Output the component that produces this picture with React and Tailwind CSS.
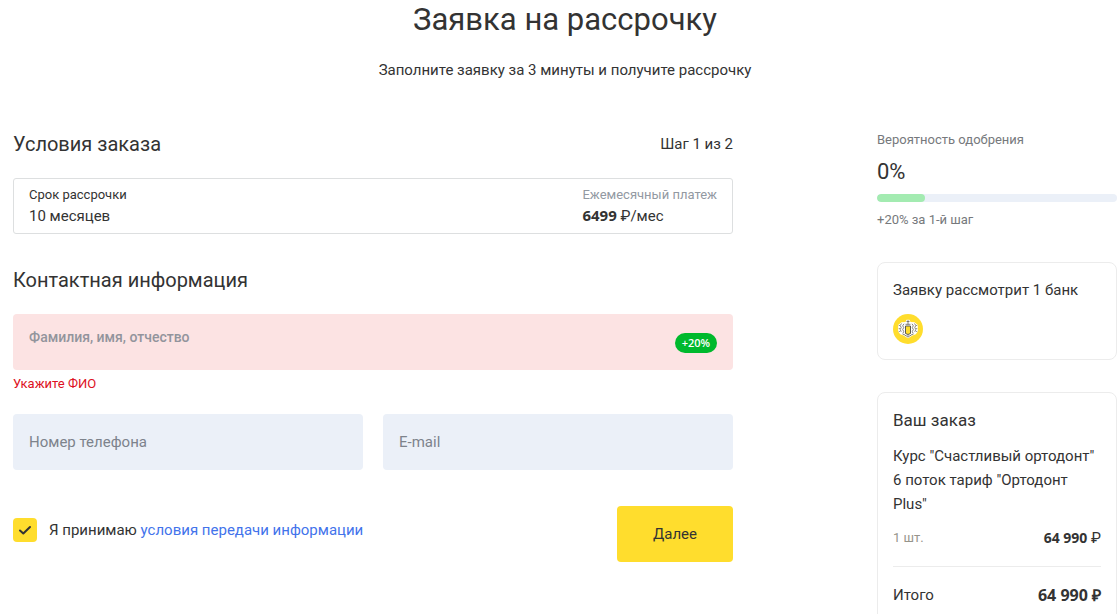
import { useState } from 'react'

const order = {
  title: 'Курс "Счастливый ортодонт" 6 поток тариф "Ортодонт Plus"',
  count: '1 шт.',
  price: '64 990',
}

function BankLogo() {
  return (
    <svg viewBox="0 0 30 30" className="block size-[30px]" role="img" aria-label="Банк">
      <circle cx="15" cy="15" r="15" fill="#ffdd2d" />
      <path
        d="M12.500 8l1-2.300h3l1 2.300 4 .2 3.300 2.800v6.500l-2 2.700-3.300 1.300L15 24.200l-4.500-2.700-3.300-1.300-2-2.700V11l3.300-2.800z"
        fill="#fff"
      />
      <g fill="none" stroke="#68655a" strokeWidth="0.8">
        <path d="M13.500 7.500h3M15 6.200v4.300M12.500 10.300h5" />
        <path d="M11 9.800l-1.300 2 1 1.700-1 2 1 2-.7 1.800M19 9.800l1.300 2-1 1.700 1 2-1 2 .7 1.800" />
        <path d="M8.500 9.500l-1.300 2 1 2-1 2 1 2.300M21.500 9.500l1.300 2-1 2 1 2-1 2.300" />
        <path d="M5.800 11.500h1M5.800 14.500h1M5.800 17.500h1M23.200 11.500h1M23.200 14.500h1M23.200 17.500h1" />
        <path d="M9.500 20l2.500 1 1 1h4l1-1 2.500-1M15 22v1.500" />
      </g>
      <path d="M12.500 12h5v7.500L15 20.500l-2.500-1z" fill="#ffdd2d" stroke="#4a4a4a" strokeWidth="0.9" />
    </svg>
  )
}

function Terms() {
  return (
    <div className="mt-5 flex justify-between rounded-[3px] border border-[#dddfe0] px-[15px] py-[6px]">
      <div>
        <p className="text-[13px] leading-5">Срок рассрочки</p>
        <p className="text-[15px] leading-[22px]">10 месяцев</p>
      </div>
      <div>
        <p className="text-[13px] leading-5 text-[#9299a2]">Ежемесячный платеж</p>
        <p className="text-[15px] leading-[22px]">
          <b className="font-['Open_Sans',sans-serif] leading-5">6499</b> ₽/мес
        </p>
      </div>
    </div>
  )
}

function Field({ id, type, label }) {
  return (
    <div className="relative min-w-0 flex-1">
      <input
        id={id}
        type={type}
        placeholder=" "
        className="peer block h-14 w-full rounded bg-[#ebf0f8] px-4 pt-4 text-[15px] outline-none"
      />
      <label
        htmlFor={id}
        className="pointer-events-none absolute top-1 left-4 text-xs leading-6 text-[#7d838c] peer-placeholder-shown:top-4 peer-placeholder-shown:text-[15px] peer-placeholder-shown:leading-6"
      >
        {label}
      </label>
    </div>
  )
}

function NameField() {
  return (
    <div className="relative mt-5">
      <input
        id="fio"
        type="text"
        aria-invalid="true"
        aria-describedby="fio-error"
        placeholder=" "
        className="peer block h-14 w-full rounded bg-[#fce3e3] pt-4 pr-20 pl-4 text-[15px] outline-none"
      />
      <label
        htmlFor="fio"
        className="pointer-events-none absolute top-1 left-4 text-xs leading-6 font-medium text-[#92949c] peer-placeholder-shown:top-[11px] peer-placeholder-shown:text-sm peer-placeholder-shown:leading-6"
      >
        Фамилия, имя, отчество
      </label>
      <span className="absolute top-[19px] right-4 rounded-full bg-[#00b92d] px-[7px] font-['Open_Sans',sans-serif] text-[11px] leading-5 font-semibold text-white">
        +20%
      </span>
    </div>
  )
}

function Approval() {
  return (
    <section>
      <p className="text-[13px] leading-5 text-[#76797c]">Вероятность одобрения</p>
      <p className="mt-2 text-[22px] leading-7">0%</p>
      <div className="mt-2 h-2 overflow-hidden rounded-full bg-[#ebf0f8]">
        <div className="h-full w-1/5 rounded-full bg-[#a3ebb1]" />
      </div>
      <p className="mt-2 text-[13px] leading-5 text-[#76797c]">+20% за 1-й шаг</p>
    </section>
  )
}

function Order() {
  return (
    <section className="mt-8 rounded-lg border border-[#ececec] px-[15px] pt-[15px] pb-6">
      <h2 className="text-[17px] leading-6">Ваш заказ</h2>
      <p className="mt-3 text-[15px] leading-6">{order.title}</p>
      <div className="mt-2.5 flex items-center justify-between border-b border-[#ececec] pb-4 leading-6">
        <span className="text-[13px] text-[#96948b]">{order.count}</span>
        <span className="text-[15px]">
          <b className="font-['Open_Sans',sans-serif] text-sm">{order.price}</b> ₽
        </span>
      </div>
      <div className="mt-4 flex items-center justify-between text-[15px] leading-6">
        <span>Итого</span>
        <b className="font-['Open_Sans',sans-serif] text-base leading-6">{order.price} ₽</b>
      </div>
    </section>
  )
}

export default function App() {
  const [accepted, setAccepted] = useState(true)

  return (
    <main className="h-screen overflow-hidden bg-white pl-[13px] font-[Roboto,sans-serif] text-[#333]">
      <header className="text-center">
        <h1 className="text-[31px] leading-10">Заявка на рассрочку</h1>
        <p className="mt-[18px] text-[15px] leading-6">Заполните заявку за 3 минуты и получите рассрочку</p>
      </header>

      <div className="mt-12 grid grid-cols-[3fr_1fr] gap-x-36">
        <form onSubmit={(e) => e.preventDefault()}>
          <div className="flex items-center justify-between">
            <h2 className="text-xl leading-7">Условия заказа</h2>
            <span className="text-[15px] leading-6">Шаг 1 из 2</span>
          </div>
          <Terms />

          <h2 className="mt-8 text-xl leading-7">Контактная информация</h2>
          <NameField />
          <p id="fio-error" className="mt-1 text-[13px] leading-5 text-[#dd1022]">Укажите ФИО</p>

          <div className="mt-5 flex gap-5">
            <Field id="phone" type="tel" label="Номер телефона" />
            <Field id="email" type="email" label="E-mail" />
          </div>

          <div className="mt-9 flex items-center justify-between">
            <div className="flex items-center gap-3 pb-2">
              <span className="relative block size-6">
                <input
                  id="accept"
                  type="checkbox"
                  checked={accepted}
                  onChange={(e) => setAccepted(e.target.checked)}
                  className="block size-6 appearance-none rounded bg-[#ebf0f8] checked:bg-[#ffdd2d]"
                />
                {accepted && (
                  <svg viewBox="0 0 24 24" className="pointer-events-none absolute inset-0 size-6" aria-hidden="true">
                    <path
                      d="M7 12.500l3.300 3L17 9"
                      fill="none"
                      stroke="#333"
                      strokeWidth="2"
                      strokeLinecap="round"
                      strokeLinejoin="round"
                    />
                  </svg>
                )}
              </span>
              <label htmlFor="accept" className="text-[15px] leading-6">
                Я принимаю <a href="#terms" className="text-[#4273eb]">условия передачи информации</a>
              </label>
            </div>
            <button type="submit" className="h-14 rounded bg-[#ffdd2d] px-9 text-[15px]">
              Далее
            </button>
          </div>
        </form>

        <aside>
          <Approval />
          <section className="mt-8 rounded-lg border border-[#ececec] p-[15px]">
            <p className="text-[15px] leading-6">Заявку рассмотрит 1 банк</p>
            <div className="mt-3">
              <BankLogo />
            </div>
          </section>
          <Order />
        </aside>
      </div>
    </main>
  )
}
